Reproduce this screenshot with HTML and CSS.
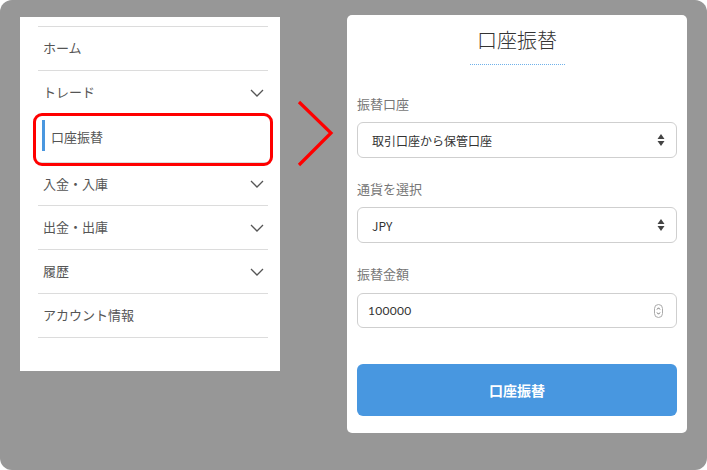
FILE: index.html
```html
<!DOCTYPE html>
<html lang="ja">
<head>
<meta charset="utf-8">
<link rel="stylesheet" href="styles.css">
</head>
<body>
<div class="stage">
  <nav class="side">
    <ul class="menu">
      <li class="item">ホーム</li>
      <li class="item">トレード<span class="chev"><svg width="14" height="8" viewBox="0 0 14 8"><path d="M1 1 L7 7 L13 1" fill="none" stroke="#555" stroke-width="1.3"/></svg></span></li>
      <li class="item active"><span class="bar"></span>口座振替</li>
      <li class="item short">入金・入庫<span class="chev"><svg width="14" height="8" viewBox="0 0 14 8"><path d="M1 1 L7 7 L13 1" fill="none" stroke="#555" stroke-width="1.3"/></svg></span></li>
      <li class="item">出金・出庫<span class="chev"><svg width="14" height="8" viewBox="0 0 14 8"><path d="M1 1 L7 7 L13 1" fill="none" stroke="#555" stroke-width="1.3"/></svg></span></li>
      <li class="item">履歴<span class="chev"><svg width="14" height="8" viewBox="0 0 14 8"><path d="M1 1 L7 7 L13 1" fill="none" stroke="#555" stroke-width="1.3"/></svg></span></li>
      <li class="item">アカウント情報</li>
    </ul>
  </nav>
  <div class="arrow">
    <svg width="40" height="70" viewBox="0 0 40 70"><path d="M4 2 L36 33 L4 65" fill="none" stroke="#f00" stroke-width="3.2"/></svg>
  </div>
  <main class="panel">
    <h1 class="title"><span>口座振替</span></h1>
    <div class="group first">
      <div class="label">振替口座</div>
      <div class="field select">取引口座から保管口座<span class="updown"><svg width="8" height="14" viewBox="0 0 8 14"><path d="M4 1 L7.5 6 L0.5 6 Z M0.5 8 L7.5 8 L4 13 Z" fill="#444"/></svg></span></div>
    </div>
    <div class="group">
      <div class="label">通貨を選択</div>
      <div class="field select">JPY<span class="updown"><svg width="8" height="14" viewBox="0 0 8 14"><path d="M4 1 L7.5 6 L0.5 6 Z M0.5 8 L7.5 8 L4 13 Z" fill="#444"/></svg></span></div>
    </div>
    <div class="group">
      <div class="label">振替金額</div>
      <div class="field number">100000<span class="spin"><svg width="9" height="14" viewBox="0 0 9 14"><rect x="0.5" y="0.5" width="8" height="13" rx="4" fill="none" stroke="#aaa"/><path d="M3 5.5 L4.5 3.8 L6 5.5 M3 8.5 L4.5 10.2 L6 8.5" fill="none" stroke="#666" stroke-width="0.9"/></svg></span></div>
    </div>
    <button class="submit">口座振替</button>
  </main>
</div>
</body>
</html>
```

FILE: styles.css
```css
* { box-sizing: border-box; }
html, body { margin: 0; padding: 0; background: #fff; }
body {
  font-family: "Noto Sans CJK JP", "Noto Sans", sans-serif;
}
.stage {
  width: 707px;
  height: 470px;
  background: #979797;
  border-radius: 12px;
  display: flex;
  align-items: flex-start;
  padding: 15px 0 0 20px;
}
.side {
  width: 260px;
  height: 354px;
  margin-top: 2px;
  background: #fff;
  padding: 9px 12px 0 18px;
}
.menu {
  list-style: none;
  margin: 0;
  padding: 0;
  border-top: 1px solid #dcdcdc;
}
.item {
  position: relative;
  height: 44px;
  border-bottom: 1px solid #dcdcdc;
  display: flex;
  align-items: center;
  padding: 0 4px 2px 5px;
  font-size: 13px;
  color: #555;
}
.item.active {
  height: 48px;
  padding-left: 4px;
  padding-bottom: 4px;
}
.item.short { height: 43px; }
.item.active::after {
  content: "";
  position: absolute;
  left: -5px;
  right: -5px;
  top: -2px;
  bottom: -4px;
  border: 3px solid #f00;
  border-radius: 9px;
}
.bar {
  width: 3px;
  height: 31px;
  background: #4a97df;
  margin-right: 6px;
  margin-top: -2px;
}
.chev {
  margin-left: auto;
  display: flex;
  margin-top: 2px;
}
.arrow {
  width: 67px;
  padding: 85px 0 0 15px;
}
.arrow svg { display: block; }
.panel {
  width: 340px;
  height: 418px;
  background: #fff;
  border-radius: 5px;
  padding: 0 10px;
}
.title {
  margin: 0;
  padding-top: 12px;
  text-align: center;
  font-weight: 300;
  font-size: 20px;
  line-height: 26px;
  color: #333;
}
.title span {
  display: inline-block;
  padding-bottom: 11px;
  width: 95px;
  border-bottom: 1px dotted #6fb1ea;
}
.group { margin-top: 23px; }
.group.first { margin-top: 31px; }
.label {
  font-size: 13px;
  line-height: 16px;
  color: #777;
  margin-bottom: 10px;
}
.field {
  height: 36px;
  border: 1px solid #cfcfcf;
  border-radius: 6px;
  display: flex;
  align-items: center;
  padding: 0 11px 0 15px;
  font-size: 12px;
  color: #333;
}
.select { padding-left: 14px; }
.field.number {
  height: 35px;
  padding-left: 10px;
  margin-top: 11px;
  font-family: "Lato", "Noto Sans", sans-serif;
  letter-spacing: 0.3px;
}
.group:last-of-type .label { margin-bottom: 0; }
.updown, .spin { margin-left: auto; display: flex; }
.spin { margin-right: 2px; }
.submit {
  display: block;
  width: 100%;
  height: 52px;
  margin-top: 36px;
  border: 0;
  border-radius: 6px;
  background: #4897e0;
  color: #fff;
  font-family: "Noto Sans CJK JP", sans-serif;
  font-weight: 700;
  font-size: 14px;
}
```
